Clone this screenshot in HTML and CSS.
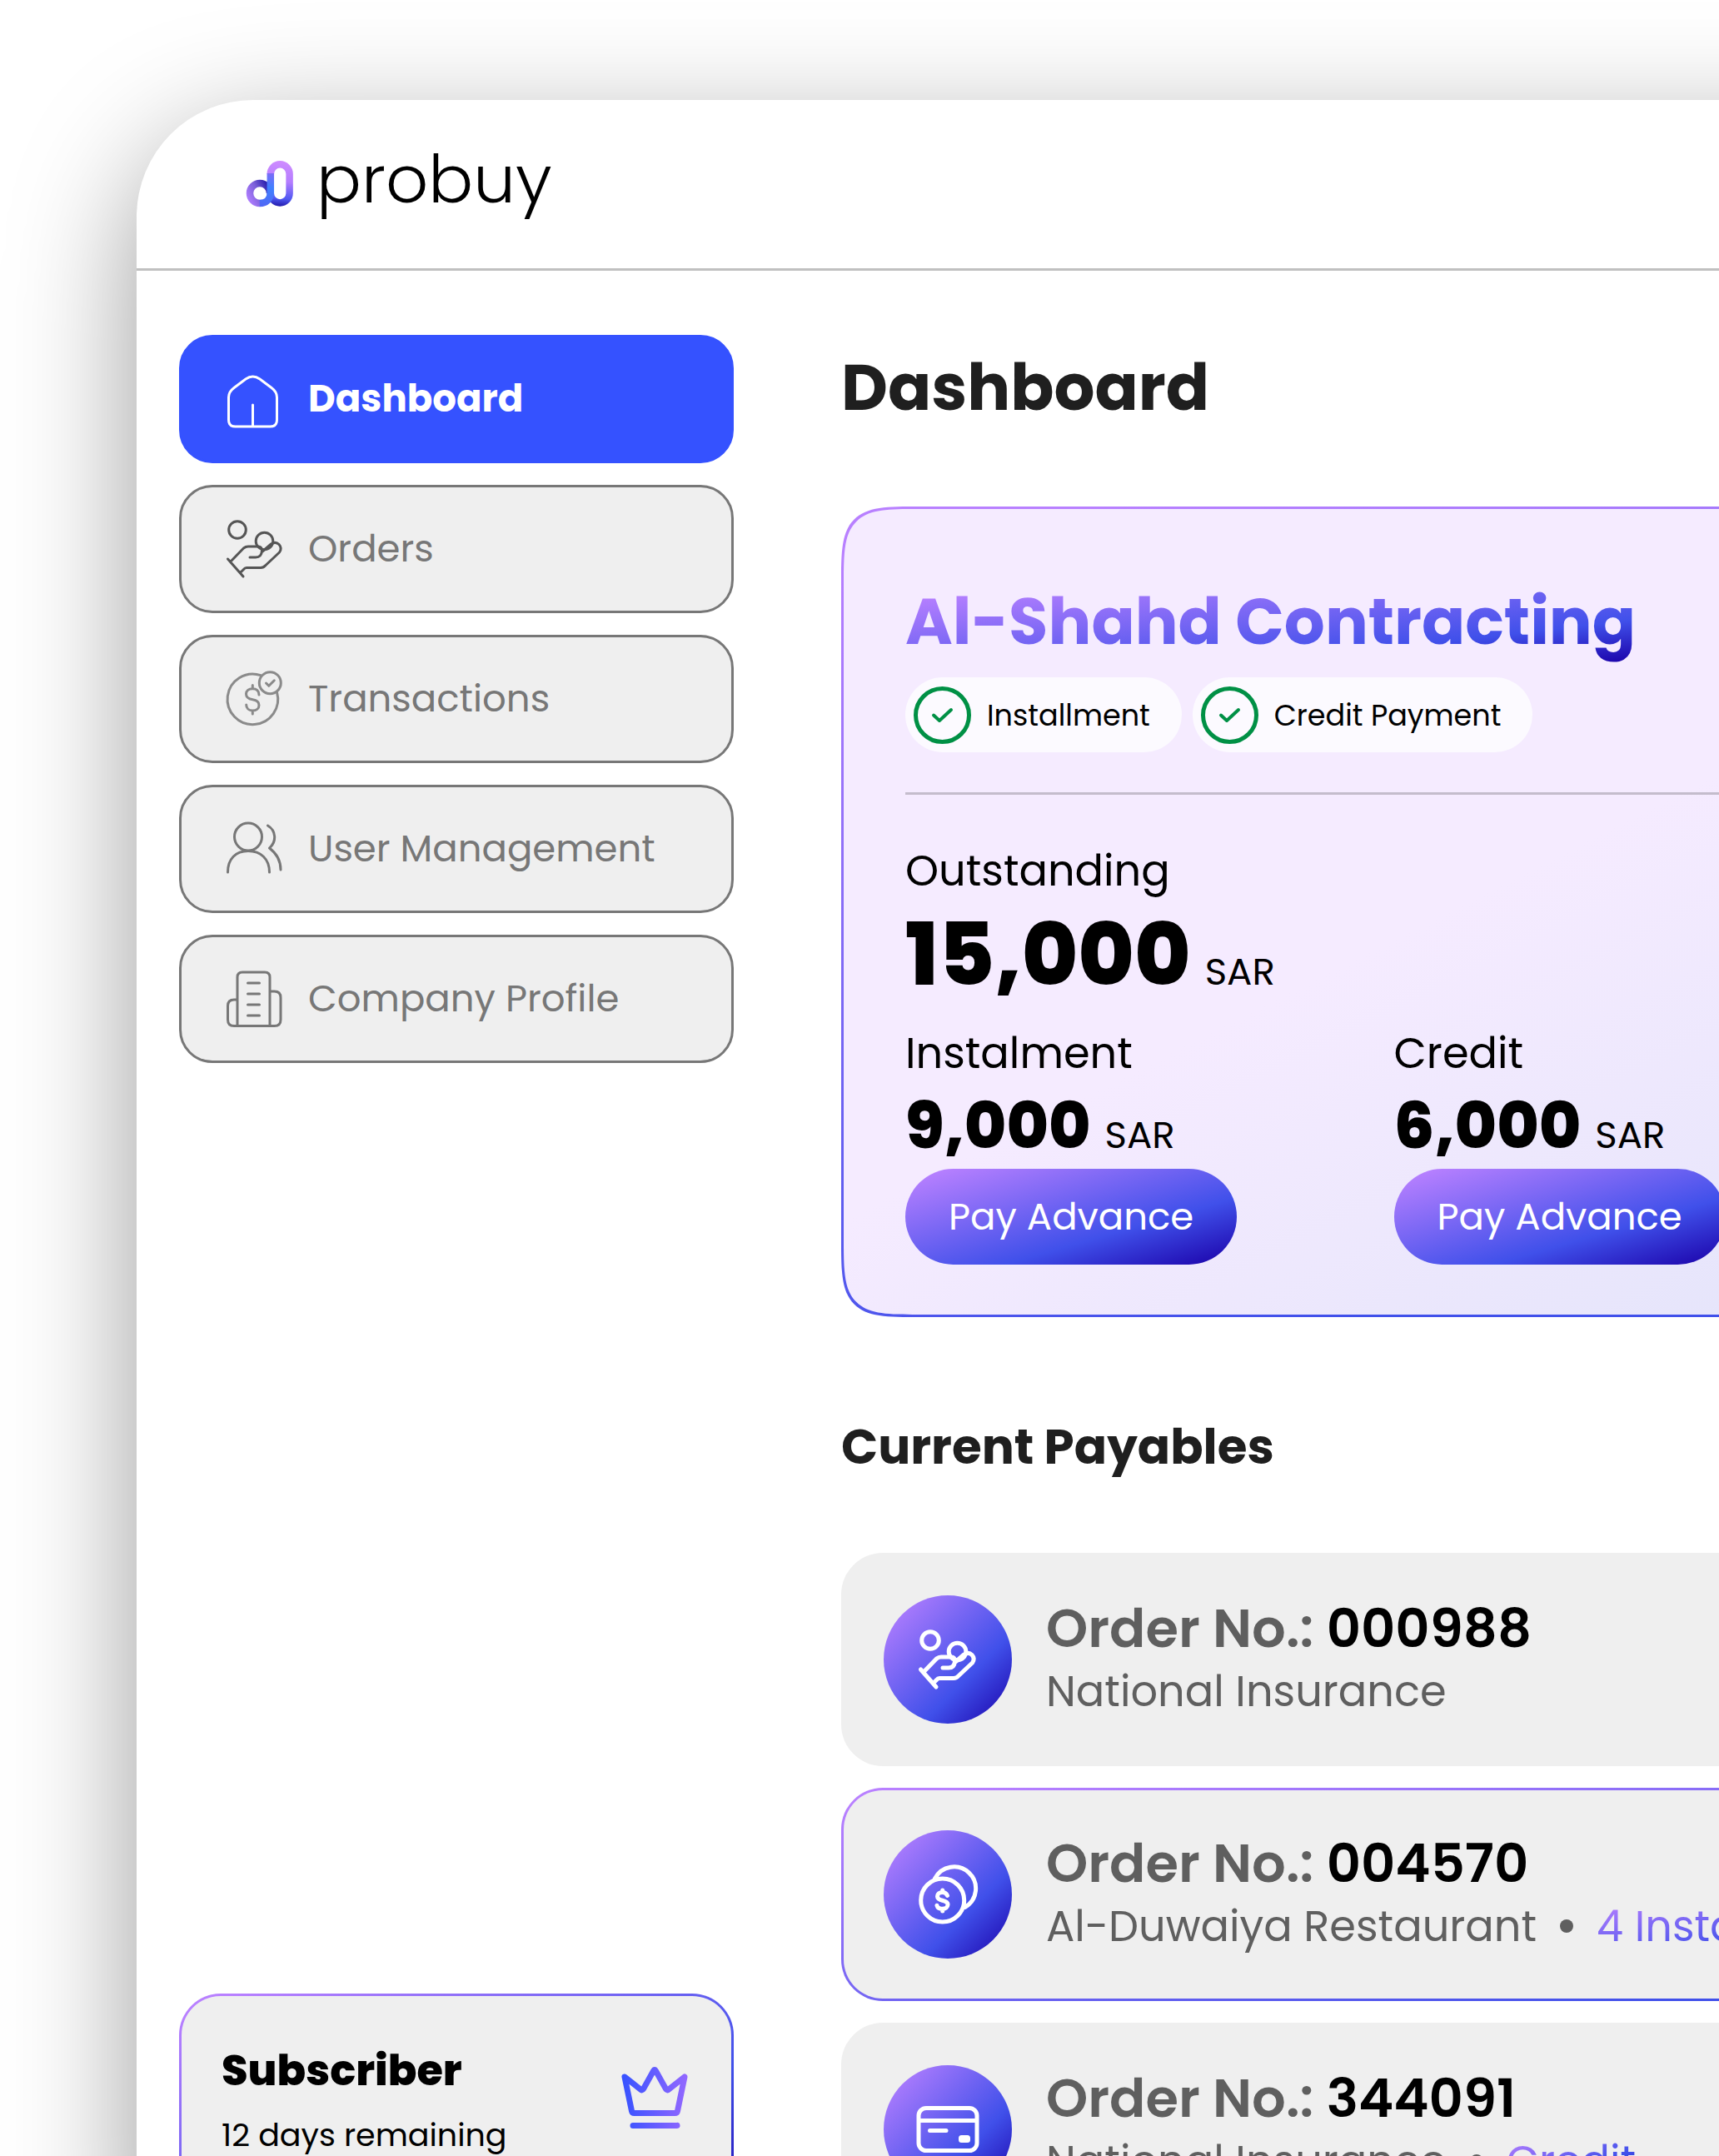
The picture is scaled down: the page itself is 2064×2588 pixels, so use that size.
FILE: index.html
```
<!DOCTYPE html>
<html lang="en">
<head>
    <meta charset="UTF-8">
    <meta name="viewport" content="width=device-width, initial-scale=1.0">
    <title>Probuy - Dashboard</title>
    <link rel="stylesheet" href="styles.css">
</head>
<body>
    <!-- Shared icons -->
    <svg class="sprite" aria-hidden="true">
        <symbol id="icon-hand" viewBox="0 0 68 68" overflow="visible">
            <circle cx="13" cy="11" r="10.3"/>
            <circle cx="45.5" cy="24.5" r="10.3"/>
            <path d="M5 49 20.500 33Q23 31 26 31H38Q42.500 31 42.500 36 42 44 35 44H28M42.500 37.500 53.500 28Q59 24.500 63 28.500 67 33 63.500 38L47 53.500Q44.500 56.500 41 56.500H24Q22 56.500 20.500 58.500L16.500 62.500M1.500 46 20 67"/>
        </symbol>
        <symbol id="icon-check" viewBox="0 0 69 69">
            <circle cx="34.5" cy="34.5" r="32" stroke-width="5"/>
            <path d="M24 34.500 31 41 45 28" stroke-width="4"/>
        </symbol>
    </svg>

    <div class="app">
        <header class="header">
            <a class="logo" href="#">
                <svg class="logo-mark" viewBox="0 0 56 56" aria-hidden="true">
                    <defs>
                        <linearGradient id="loop" x1="40" y1="0" x2="36" y2="55" gradientUnits="userSpaceOnUse">
                            <stop offset="0" stop-color="#cf8cff"/>
                            <stop offset=".45" stop-color="#b47dff"/>
                            <stop offset=".82" stop-color="#4f58f2"/>
                            <stop offset="1" stop-color="#1f16a6"/>
                        </linearGradient>
                        <linearGradient id="ring" x1="0" y1="44" x2="28" y2="30" gradientUnits="userSpaceOnUse">
                            <stop offset="0" stop-color="#b07eff"/>
                            <stop offset=".5" stop-color="#7a5fd8"/>
                            <stop offset="1" stop-color="#1f16a6"/>
                        </linearGradient>
                        <linearGradient id="stem" x1="28" y1="10" x2="22" y2="54" gradientUnits="userSpaceOnUse">
                            <stop offset="0" stop-color="#8c66f5"/>
                            <stop offset=".5" stop-color="#3f80ff"/>
                            <stop offset="1" stop-color="#4f68f5"/>
                        </linearGradient>
                    </defs>
                    <g fill="none" stroke-width="8.5">
                        <path stroke="url(#loop)" d="M28.800 39a11.400 11.400 0 0 0 22.800 0V15.700a11.400 11.400 0 0 0-22.800 0"/>
                        <path stroke="url(#ring)" d="M28 39a12 12 0 1 0-12 12"/>
                        <path stroke="url(#stem)" d="M28.800 15V38c0 8-5 13-13 13"/>
                    </g>
                </svg>
                <span class="logo-name">probuy</span>
            </a>
        </header>

        <div class="layout">
            <aside class="sidebar">
                <nav class="nav">
                    <a class="nav-item active" href="#">
                        <svg viewBox="0 0 68 68" aria-hidden="true"><path d="M2.500 32c0-5 2.500-8.500 6.500-11.500L23 10q8.500-6 17 0l14 10.500c4 3 6.500 6.500 6.500 11.500v27q0 8-8 8h-42q-8 0-8-8zM31.500 41v25"/></svg>
                        <span>Dashboard</span>
                    </a>
                    <a class="nav-item nav-orders" href="#">
                        <svg aria-hidden="true"><use href="#icon-hand"/></svg>
                        <span>Orders</span>
                    </a>
                    <a class="nav-item nav-transactions" href="#">
                        <svg viewBox="0 0 68 68" aria-hidden="true"><path d="M41 5.600A30.300 30.300 0 1 0 60.500 26M31.300 17.500v4M31.300 48v4M39 29c0-4.500-3-7.300-7.700-7.300S23.500 24 23.500 28s3 6 7.800 6.700 7.700 3 7.700 6.700-3 6.600-7.700 6.600-7.600-3-7.600-7M47.500 15l3.300 3.300 6.500-6.500"/><circle cx="52.300" cy="14.700" r="13"/></svg>
                        <span>Transactions</span>
                    </a>
                    <a class="nav-item" href="#">
                        <svg viewBox="0 0 68 68" aria-hidden="true"><circle cx="26" cy="19.500" r="16.500"/><path d="M1.500 62C1.500 46 11 36.500 26 36.500S51.500 46 51.500 62M49.500 6c10 6 11 19 2 27 8 6 13.500 15 13.500 26"/></svg>
                        <span>User Management</span>
                    </a>
                    <a class="nav-item" href="#">
                        <svg viewBox="0 0 68 68" aria-hidden="true"><path d="M13 66.500V8q0-6 6-6h27q6 0 6 6v58.500M13 35H9q-7.500 0-7.500 7.500V59q0 7.500 7.500 7.500h48.500q7.500 0 7.500-7.500V32.500q0-7.500-7.500-7.500H52M25.500 15h14M25.500 28h14M25.500 41h14M25.500 54h14"/></svg>
                        <span>Company Profile</span>
                    </a>
                </nav>

                <section class="subscriber">
                    <div>
                        <h2>Subscriber</h2>
                        <p>12 days remaining</p>
                    </div>
                    <svg class="crown" viewBox="0 0 80 74" aria-hidden="true">
                        <defs>
                            <linearGradient id="crown" x1="0" y1="40" x2="80" y2="40" gradientUnits="userSpaceOnUse">
                                <stop offset="0" stop-color="#3552ff"/>
                                <stop offset="1" stop-color="#9468ff"/>
                            </linearGradient>
                        </defs>
                        <path stroke="url(#crown)" d="M4 12 23 27Q25 29 26.500 26.500L38.500 5Q40 2 41.500 5L53.500 26.500Q55 29 57 27L76 12 67.500 53Q67 55.500 64.500 55.500H15.500Q13 55.500 12.500 53ZM14 70.500H66.500L67 70.400"/>
                    </svg>
                </section>
            </aside>

            <main class="main">
                <h1>Dashboard</h1>

                <section class="account">
                    <h2 class="account-name">Al-Shahd Contracting</h2>
                    <div class="pills">
                        <span class="pill"><svg aria-hidden="true"><use href="#icon-check"/></svg>Installment</span>
                        <span class="pill"><svg aria-hidden="true"><use href="#icon-check"/></svg>Credit Payment</span>
                    </div>
                    <hr>
                    <div class="balance">
                        <div class="label">Outstanding</div>
                        <div class="amount amount-lg">15,000 <span>SAR</span></div>
                    </div>
                    <div class="split">
                        <div class="balance">
                            <div class="label">Instalment</div>
                            <div class="amount">9,000 <span>SAR</span></div>
                            <button type="button" class="pay-btn">Pay Advance</button>
                        </div>
                        <div class="balance">
                            <div class="label">Credit</div>
                            <div class="amount">6,000 <span>SAR</span></div>
                            <button type="button" class="pay-btn">Pay Advance</button>
                        </div>
                    </div>
                </section>

                <h2 class="section-title">Current Payables</h2>

                <div class="orders">
                    <article class="order">
                        <div class="order-icon"><svg aria-hidden="true"><use href="#icon-hand"/></svg></div>
                        <div>
                            <h3>Order No.: <b>000988</b></h3>
                            <p>National Insurance</p>
                        </div>
                    </article>
                    <article class="order selected">
                        <div class="order-icon">
                            <svg viewBox="0 0 68 68" aria-hidden="true"><circle cx="27.700" cy="41" r="26"/><path d="M18.500 15A26 26 0 1 1 54.500 49.500M27.700 29v2.500M27.700 51.500V54M33.500 35.500c-1-3-3.300-4-6-4-3.500 0-6 1.800-6 4.800s2.500 4.200 6 5 6.500 2 6.500 5-2.800 5-6.300 5-6-1.200-6.700-4"/></svg>
                        </div>
                        <div>
                            <h3>Order No.: <b>004570</b></h3>
                            <p>Al-Duwaiya Restaurant <i class="dot"></i> <span class="tag">4 Instalments</span></p>
                        </div>
                    </article>
                    <article class="order">
                        <div class="order-icon">
                            <svg viewBox="0 0 68 68" aria-hidden="true"><rect x="-1" y="8.500" width="70" height="51" rx="9"/><path d="M0 23.500H68M12.500 35.500H32"/><rect x="49.500" y="43.500" width="9" height="4" rx="1"/></svg>
                        </div>
                        <div>
                            <h3>Order No.: <b>344091</b></h3>
                            <p>National Insurance <i class="dot"></i> <span class="tag">Credit</span></p>
                        </div>
                    </article>
                </div>
            </main>
        </div>
    </div>
</body>
</html>
```
FILE: styles.css
```
:root {
    --brand: linear-gradient(to bottom right, #b880ff 5%, #4050ea 65%, #1a00a8);
    --blue: #3552ff;
    --gray: #efefef;
}

* {
    box-sizing: border-box;
    margin: 0;
}

body {
    height: 100vh;
    overflow: hidden;
    background: #fff;
    color: #000;
    font-family: Poppins, Inter, sans-serif;
}

svg {
    flex: none;
    overflow: visible;
    fill: none;
    stroke: currentColor;
    stroke-width: 3;
    stroke-linecap: round;
    stroke-linejoin: round;
}

.sprite {
    position: absolute;
    width: 0;
    height: 0;
}

/* The window runs off the right and bottom edges */
.app {
    margin: 120px -324px 0 164px;
    background: #fff;
    border-radius: 140px 0 0 0;
    box-shadow: 0 48px 150px rgba(0, 0, 0, 0.4);
}

.header {
    display: flex;
    align-items: center;
    height: 205px;
    padding-left: 132px;
    border-bottom: 3px solid #c0c0c0;
}

.logo {
    display: flex;
    align-items: center;
    gap: 28px;
    color: #000;
    text-decoration: none;
}

.logo-mark {
    width: 56px;
    height: 56px;
    stroke-linecap: butt;
}

.logo-name {
    padding-bottom: 12px;
    font-size: 80px;
    font-weight: 300;
    line-height: 80px;
}

.layout {
    display: flex;
    gap: 129px;
    padding: 77px 51px 0;
}

/* Sidebar */
.sidebar {
    display: flex;
    flex: 0 0 666px;
    flex-direction: column;
    justify-content: space-between;
}

.nav {
    display: flex;
    flex-direction: column;
    gap: 26px;
}

.nav-item {
    display: flex;
    align-items: center;
    gap: 30px;
    height: 154px;
    padding: 0 54px;
    border: 3px solid #777;
    border-radius: 40px;
    background: var(--gray);
    color: #777;
    font-size: 45px;
    text-decoration: none;
}

.nav-item svg {
    width: 68px;
    height: 68px;
}

.nav-item.active {
    border-color: var(--blue);
    background: var(--blue);
    color: #fff;
    font-weight: 700;
}

.nav-orders svg {
    color: #555;
}

.nav-transactions svg {
    color: #8a8a8a;
}

.subscriber {
    display: flex;
    align-items: flex-start;
    justify-content: space-between;
    min-height: 291px;
    padding: 54px 52px 50px 48px;
    border: 3px solid transparent;
    border-radius: 50px;
    background: linear-gradient(var(--gray), var(--gray)) padding-box, var(--brand) border-box;
}

.subscriber h2 {
    margin-bottom: 14px;
    font-size: 51px;
    font-weight: 800;
    line-height: 70px;
}

.subscriber p {
    font-size: 38px;
    line-height: 58px;
}

.crown {
    width: 80px;
    height: 74px;
    margin-top: 31px;
    stroke-width: 7;
}

/* Main */
.main {
    flex: 1;
    min-width: 0;
}

h1 {
    margin-bottom: 80px;
    color: #1f1f1f;
    font-size: 77px;
    line-height: 126px;
}

.account {
    padding: 85px 74px 60px;
    border: 3px solid transparent;
    border-radius: 98px;
    corner-shape: squircle;
    background: linear-gradient(153deg, #f5ebff 52%, #e6e5fb 92%) padding-box, linear-gradient(168deg, #b880ff 5%, #4050ea 88%) border-box;
}

.account-name {
    width: fit-content;
    margin-bottom: 17px;
    background: linear-gradient(to bottom right, #b880ff 10%, #4050ea 74%, #1a00a8);
    background-clip: text;
    color: transparent;
    font-size: 77px;
    line-height: 100px;
}

.pills {
    display: flex;
    gap: 13px;
}

.pill {
    display: flex;
    align-items: center;
    gap: 19px;
    height: 90px;
    padding: 0 38px 0 10px;
    border-radius: 45px;
    background: #fcfaff;
    font-size: 35px;
}

.pill svg {
    width: 69px;
    height: 69px;
    color: #009045;
}

hr {
    height: 3px;
    margin: 48px 0 56px;
    border: 0;
    background: #c4bccc;
}

.balance {
    display: flex;
    flex-direction: column;
    align-items: flex-start;
    gap: 6px;
}

.split {
    display: grid;
    grid-template-columns: 1fr 1fr;
    margin-top: 23px;
}

.label {
    font-size: 51px;
    line-height: 70px;
}

.amount {
    display: flex;
    align-items: baseline;
    gap: 17px;
    font-size: 77px;
    font-weight: 800;
    line-height: 92px;
}

.amount-lg {
    font-size: 103px;
    line-height: 120px;
}

.amount span {
    font-size: 45px;
    font-weight: 400;
    line-height: 1;
}

.pay-btn {
    height: 115px;
    padding: 0 52px;
    border: 0;
    border-radius: 58px;
    background: var(--brand);
    color: #fff;
    font: inherit;
    font-size: 45px;
}

.section-title {
    margin: 113px 0 84px;
    color: #1f1f1f;
    font-size: 58px;
    line-height: 86px;
}

.orders {
    display: flex;
    flex-direction: column;
    gap: 26px;
}

.order {
    display: flex;
    align-items: flex-start;
    gap: 41px;
    padding: 48px;
    border: 3px solid transparent;
    border-radius: 50px;
    background: var(--gray) border-box;
    color: #5f5f5f;
}

.order.selected {
    background: linear-gradient(var(--gray), var(--gray)) padding-box, linear-gradient(170deg, #b880ff 5%, #4050ea 88%) border-box;
}

.order-icon {
    display: flex;
    flex: none;
    align-items: center;
    justify-content: center;
    width: 154px;
    height: 154px;
    border-radius: 50%;
    background: var(--brand);
    color: #fff;
}

.order-icon svg {
    width: 68px;
    height: 68px;
    stroke-width: 5;
}

.order h3 {
    font-size: 64px;
    font-weight: 600;
    line-height: 80px;
}

.order b {
    color: #000;
    font-weight: 600;
}

.order p {
    display: flex;
    align-items: center;
    gap: 28px;
    font-size: 51px;
    line-height: 70px;
    white-space: nowrap;
}

.dot {
    width: 16px;
    height: 16px;
    border-radius: 50%;
    background: #5f5f5f;
}

.tag {
    background: var(--brand);
    background-clip: text;
    color: transparent;
}
```
